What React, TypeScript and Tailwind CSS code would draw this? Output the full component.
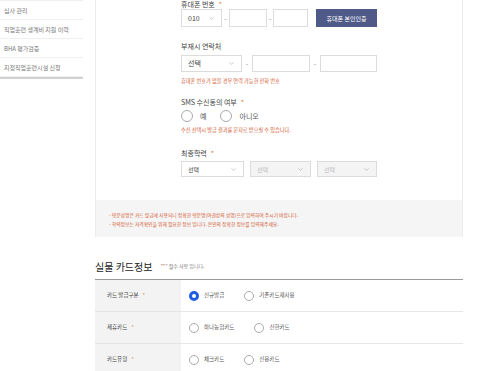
import { ChevronDown } from "lucide-react";

const font = { fontFamily: '"Noto Sans CJK KR", "Noto Sans", sans-serif' };

const menu = ["심사 관리", "직업훈련 생계비 지원 이력", "BHA 평가검증", "지정직업훈련시설 신청"];

function Star() {
  return <span className="ml-[4px] text-[#e0712f]">*</span>;
}

function Select({ w, label, disabled }: { w: string; label: string; disabled?: boolean }) {
  return (
    <div
      className={`${w} flex h-full items-center justify-between border border-[#dcdcdc] px-[6px] ${
        disabled ? "bg-[#f4f4f4] text-[#bbbbbb]" : "bg-white text-[#444]"
      }`}
    >
      <span>{label}</span>
      <ChevronDown size={7} strokeWidth={1.5} className="text-[#888]" />
    </div>
  );
}

function Input({ w }: { w: string }) {
  return <div className={`${w} h-full border border-[#dcdcdc] bg-white`} />;
}

function Dash({ w }: { w: string }) {
  return <span className={`${w} text-center text-[#888]`}>-</span>;
}

function Radio({ label, checked, small }: { label: string; checked?: boolean; small?: boolean }) {
  const size = small ? "h-[10px] w-[10px]" : "h-[12px] w-[12px]";
  return (
    <div className="flex items-center">
      <span
        className={`${size} rounded-full ${
          checked ? "border-[3px] border-[#1f5fe0]" : "border border-[#aaaaaa]"
        } bg-white`}
      />
      <span className={`${small ? "ml-[5px]" : "ml-[7px]"} text-[#555]`}>{label}</span>
    </div>
  );
}

function CardRow({ label, a, b, checked }: { label: string; a: string; b: string; checked?: boolean }) {
  return (
    <div className="flex h-[32px] border-b border-[#e6e6e6]">
      <div className="flex w-[86px] items-center bg-[#f3f3f3] pl-[12px] text-[#444]">
        {label}
        <Star />
      </div>
      <div className="flex flex-1 items-center gap-[20px] pl-[8px] text-[5.5px]">
        <Radio label={a} checked={checked} small />
        <Radio label={b} small />
      </div>
    </div>
  );
}

export default function App() {
  return (
    <div className="flex h-[371px] w-[483px] overflow-hidden bg-white text-[7px]" style={font}>
      <div className="w-[83px] shrink-0">
        <ul className="border-t border-[#efefef]">
          {menu.map(m => (
            <li key={m} className="flex h-[19px] items-center border-b border-[#efefef] pl-[4px] text-[6px] text-[#777]">
              {m}
            </li>
          ))}
        </ul>
        <div className="h-[2px] bg-[#d2d2d2]" />
      </div>

      <div className="ml-[12px] w-[368px] shrink-0">
        <div className="border-x border-[#ececec]">
          <div className="h-[200px] pl-[85px] text-[#444]">
            <div className="flex h-[8px] items-center leading-[8px]">
              휴대폰 번호
              <Star />
            </div>
            <div className="mt-[1px] flex h-[18px] items-center">
              <Select w="w-[41px]" label="010" />
              <Dash w="w-[7px]" />
              <Input w="w-[38px]" />
              <Dash w="w-[6px]" />
              <Input w="w-[35px]" />
              <button className="ml-[8px] h-full w-[61px] bg-[#4f5a88] text-[6px] text-white">
                휴대폰 본인인증
              </button>
            </div>

            <div className="mt-[14px] flex h-[10px] items-center">부재시 연락처</div>
            <div className="mt-[4px] flex h-[17px] items-center">
              <Select w="w-[61px]" label="선택" />
              <Dash w="w-[10px]" />
              <Input w="w-[58px]" />
              <Dash w="w-[10px]" />
              <Input w="w-[57px]" />
            </div>
            <div className="mt-[4px] flex h-[10px] items-center text-[5.2px] text-[#d2552e]">
              휴대폰 번호가 없을 경우 연락 가능한 전화 번호
            </div>

            <div className="mt-[11px] flex h-[10px] items-center">
              SMS 수신동의 여부
              <Star />
            </div>
            <div className="mt-[3px] flex h-[12px] items-center gap-[14px]">
              <Radio label="예" />
              <Radio label="아니오" />
            </div>
            <div className="mt-[3px] flex h-[10px] items-center text-[5.2px] text-[#d2552e]">
              수신 선택시 발급 결과를 문자로 받으실 수 있습니다.
            </div>

            <div className="mt-[13px] flex h-[10px] items-center">
              최종학력
              <Star />
            </div>
            <div className="mt-[3px] flex h-[16px] items-center gap-[6px] text-[6px]">
              <Select w="w-[63px]" label="선택" />
              <Select w="w-[61px]" label="선택" disabled />
              <Select w="w-[60px]" label="선택" disabled />
            </div>
          </div>

          <div className="flex h-[37px] flex-col justify-center bg-[#f5f5f5] pl-[13px] text-[4.8px] leading-[9px] text-[#d2552e]">
            <p>- 영문성명은 카드 발급에 사용되니 정확한 영문명(여권상의 성명)으로 입력하여 주시기 바랍니다.</p>
            <p>- 학력정보는 자격확인을 위해 필요한 정보 입니다. 본인의 정확한 정보를 입력해주세요.</p>
          </div>
        </div>

        <div className="mt-[21px] flex h-[16px] items-center">
          <h2 className="text-[10px] font-normal text-[#222]">실물 카드정보</h2>
          <span className="ml-[8px] text-[5px] text-[#777]">
            "<span className="text-[#e0712f]">*</span>" 필수 사항 입니다.
          </span>
        </div>

        <div className="mt-[5px] border-t border-[#9a9a9a] text-[5.5px]">
          <CardRow label="카드 발급구분" a="신규발급" b="기존카드재사용" checked />
          <CardRow label="제휴카드" a="하나농협카드" b="신한카드" />
          <CardRow label="카드유형" a="체크카드" b="신용카드" />
        </div>
      </div>
    </div>
  );
}
